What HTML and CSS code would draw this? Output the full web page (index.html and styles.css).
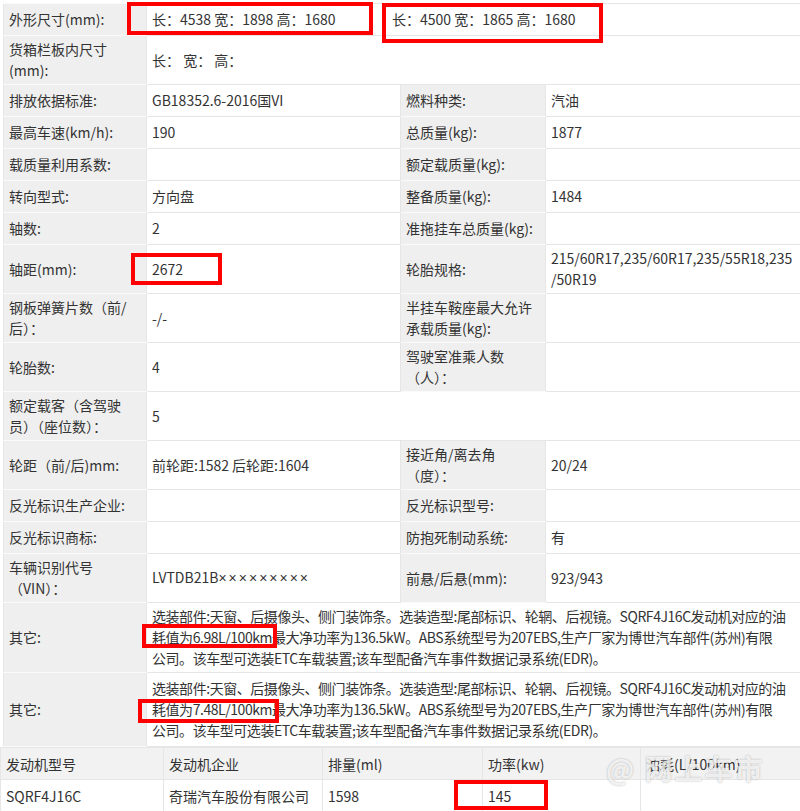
FILE: index.html
```html
<!DOCTYPE html>
<html lang="zh-CN">
<head>
  <meta charset="UTF-8" />
  <title>车辆参数</title>
  <link rel="stylesheet" href="styles.css">
</head>
<body>
<div class="sheet">

  <table class="params">
    <colgroup>
      <col class="c-label"><col class="c-value"><col class="c-label2"><col class="c-value2">
    </colgroup>
    <tr>
      <td class="label">外形尺寸(mm):</td>
      <td colspan="3"><span class="dim">长：4538 宽：1898 高：1680</span>长：4500 宽：1865 高：1680</td>
    </tr>
    <tr class="two">
      <td class="label">货箱栏板内尺寸<br>(mm):</td>
      <td colspan="3">长： 宽： 高：</td>
    </tr>
    <tr>
      <td class="label">排放依据标准:</td>
      <td>GB18352.6-2016国VI</td>
      <td class="label">燃料种类:</td>
      <td>汽油</td>
    </tr>
    <tr>
      <td class="label">最高车速(km/h):</td>
      <td>190</td>
      <td class="label">总质量(kg):</td>
      <td>1877</td>
    </tr>
    <tr>
      <td class="label">载质量利用系数:</td>
      <td></td>
      <td class="label">额定载质量(kg):</td>
      <td></td>
    </tr>
    <tr>
      <td class="label">转向型式:</td>
      <td>方向盘</td>
      <td class="label">整备质量(kg):</td>
      <td>1484</td>
    </tr>
    <tr>
      <td class="label">轴数:</td>
      <td>2</td>
      <td class="label">准拖挂车总质量(kg):</td>
      <td></td>
    </tr>
    <tr class="two">
      <td class="label">轴距(mm):</td>
      <td>2672</td>
      <td class="label">轮胎规格:</td>
      <td>215/60R17,235/60R17,235/55R18,235<br>/50R19</td>
    </tr>
    <tr class="two">
      <td class="label">钢板弹簧片数（前/<br>后）：</td>
      <td>-/-</td>
      <td class="label">半挂车鞍座最大允许<br>承载质量(kg):</td>
      <td></td>
    </tr>
    <tr class="two">
      <td class="label">轮胎数:</td>
      <td>4</td>
      <td class="label">驾驶室准乘人数<br>（人）：</td>
      <td></td>
    </tr>
    <tr class="two">
      <td class="label">额定载客（含驾驶<br>员）（座位数）：</td>
      <td colspan="3">5</td>
    </tr>
    <tr class="two">
      <td class="label">轮距（前/后)mm:</td>
      <td>前轮距:1582 后轮距:1604</td>
      <td class="label">接近角/离去角<br>（度）：</td>
      <td>20/24</td>
    </tr>
    <tr>
      <td class="label">反光标识生产企业:</td>
      <td></td>
      <td class="label">反光标识型号:</td>
      <td></td>
    </tr>
    <tr>
      <td class="label">反光标识商标:</td>
      <td></td>
      <td class="label">防抱死制动系统:</td>
      <td>有</td>
    </tr>
    <tr class="vin">
      <td class="label">车辆识别代号<br>（VIN）：</td>
      <td>LVTDB21B<span class="mask">×××××××××</span></td>
      <td class="label">前悬/后悬(mm):</td>
      <td>923/943</td>
    </tr>
    <tr class="other">
      <td class="label">其它:</td>
      <td colspan="3" class="note">选装部件:天窗、后摄像头、侧门装饰条。选装造型:尾部标识、轮辋、后视镜。SQRF4J16C发动机对应的油<br>耗值为6.98L/100km最大净功率为136.5kW。ABS系统型号为207EBS,生产厂家为博世汽车部件(苏州)有限<br>公司。该车型可选装ETC车载装置;该车型配备汽车事件数据记录系统(EDR)。</td>
    </tr>
    <tr class="other other2">
      <td class="label">其它:</td>
      <td colspan="3" class="note">选装部件:天窗、后摄像头、侧门装饰条。选装造型:尾部标识、轮辋、后视镜。SQRF4J16C发动机对应的油<br>耗值为7.48L/100km最大净功率为136.5kW。ABS系统型号为207EBS,生产厂家为博世汽车部件(苏州)有限<br>公司。该车型可选装ETC车载装置;该车型配备汽车事件数据记录系统(EDR)。</td>
    </tr>
  </table>

  <table class="engine">
    <colgroup>
      <col class="e1"><col class="e2"><col class="e3"><col class="e4"><col class="e5">
    </colgroup>
    <tr class="head">
      <td>发动机型号</td>
      <td>发动机企业</td>
      <td>排量(ml)</td>
      <td>功率(kw)</td>
      <td>油耗(L/100km)</td>
    </tr>
    <tr>
      <td>SQRF4J16C</td>
      <td>奇瑞汽车股份有限公司</td>
      <td>1598</td>
      <td>145</td>
      <td></td>
    </tr>
  </table>

  <!-- 红框标注 -->
  <div class="mark m-dim1"></div>
  <div class="mark m-dim2"></div>
  <div class="mark m-wheelbase"></div>
  <div class="mark m-fuel1"></div>
  <div class="mark m-fuel2"></div>
  <div class="mark m-power"></div>

  <div class="watermark">@ 网上车市</div>
</div>
</body>
</html>
```

FILE: styles.css
```css
body {
  margin: 0;
  background-color: #fff;
  color: #333;
  font-family: "Noto Sans CJK SC", sans-serif;
  font-size: 14px;
}
.sheet {
  position: relative;
  width: 800px;
  height: 811px;
  overflow: hidden;
}

/* 参数表 */
.params {
  table-layout: fixed;
  border-collapse: collapse;
  width: 797px;
  margin: 3px 0 0 3px;
}
.c-label { width: 143px; }
.c-value { width: 254px; }
.c-label2 { width: 145px; }
.c-value2 { width: 255px; }
.params td {
  padding: 3px 5px;
  line-height: 21px;
  border: 1px solid #e6e6e6;
  vertical-align: middle;
  white-space: nowrap;
  overflow: hidden;
}
.params td.label {
  background-color: #efefef;
  border-color: #fafafa #e6e6e6;
}
.params td.note {
  letter-spacing: -0.45px;
}
.params tr { height: 32px; }
.params tr.two { height: 48px; }
.params tr.vin { height: 46px; }
.params tr.other { height: 70px; }
.params tr.other2 { height: 74px; }
.dim {
  display: inline-block;
  width: 240px;
}
.mask {
  font-family: "Liberation Sans", sans-serif;
  letter-spacing: 2px;
}

/* 发动机表 */
.engine {
  table-layout: fixed;
  border-collapse: collapse;
  width: 800px;
}
.e1 { width: 163px; }
.e2 { width: 159px; }
.e3 { width: 160px; }
.e4 { width: 158px; }
.e5 { width: 160px; }
.engine td {
  height: 31px;
  padding: 0 5px;
  border: 1px solid #e6e6e6;
  white-space: nowrap;
}
.engine .head td { background-color: #f2f2f2; }

/* 标注 */
.mark {
  position: absolute;
  border: 4px solid #f00;
  box-sizing: border-box;
}
.m-dim1 { left: 127px; top: 2px; width: 246px; height: 33px; }
.m-dim2 { left: 382px; top: 3px; width: 221px; height: 40px; }
.m-wheelbase { left: 131px; top: 253px; width: 91px; height: 32px; }
.m-fuel1 { left: 142px; top: 624px; width: 135px; height: 24px; }
.m-fuel2 { left: 138px; top: 699px; width: 141px; height: 24px; }
.m-power { left: 454px; top: 780px; width: 94px; height: 30px; }

.watermark {
  position: absolute;
  left: 606px;
  top: 748px;
  font-size: 28px;
  font-weight: bold;
  letter-spacing: 2px;
  color: rgba(255, 255, 255, 0.8);
  text-shadow: 0 0 2px rgba(0, 0, 0, 0.3);
}
```
